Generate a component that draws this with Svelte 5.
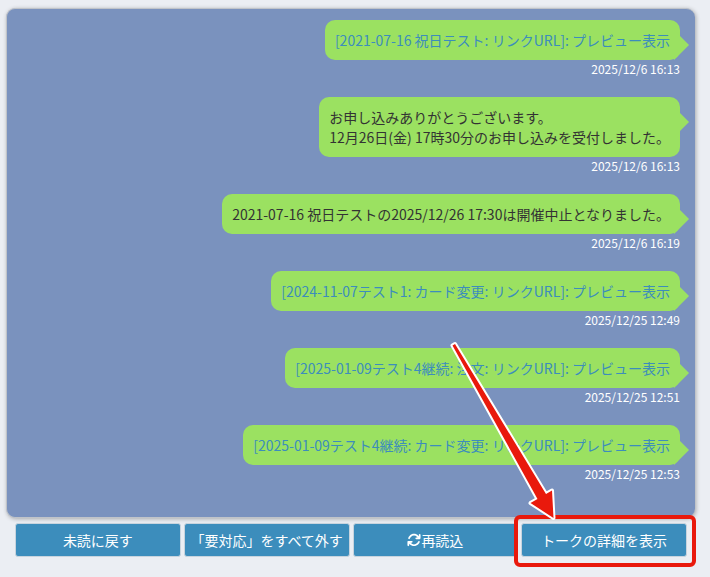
<script lang="ts">
  interface Message {
    lines: string[];
    sentAt: string;
    preview?: boolean;
  }

  const messages: Message[] = [
    { lines: ['[2021-07-16 祝日テスト: リンクURL]: プレビュー表示'], sentAt: '2025/12/6 16:13', preview: true },
    {
      lines: ['お申し込みありがとうございます。', '12月26日(金) 17時30分のお申し込みを受付しました。'],
      sentAt: '2025/12/6 16:13',
    },
    { lines: ['2021-07-16 祝日テストの2025/12/26 17:30は開催中止となりました。'], sentAt: '2025/12/6 16:19' },
    { lines: ['[2024-11-07テスト1: カード変更: リンクURL]: プレビュー表示'], sentAt: '2025/12/25 12:49', preview: true },
    { lines: ['[2025-01-09テスト4継続: 注文: リンクURL]: プレビュー表示'], sentAt: '2025/12/25 12:51', preview: true },
    { lines: ['[2025-01-09テスト4継続: カード変更: リンクURL]: プレビュー表示'], sentAt: '2025/12/25 12:53', preview: true },
  ];
</script>

<main class="talk">
  <section class="talk__log">
    {#each messages as message}
      <article class="message">
        <div class="message__bubble">
          {#each message.lines as line}
            {#if message.preview}
              <a href="#preview">{line}</a>
            {:else}
              <p>{line}</p>
            {/if}
          {/each}
        </div>
        <time class="message__time">{message.sentAt}</time>
      </article>
    {/each}
  </section>

  <div class="actions">
    <button type="button">未読に戻す</button>
    <button type="button">「要対応」をすべて外す</button>
    <button type="button">
      <svg class="icon" viewBox="0 0 512 512" aria-hidden="true">
        <path
          d="M105.1 202.6c7.7-21.8 20.2-42.3 37.8-59.8c62.5-62.5 163.8-62.5 226.3 0L386.3 160H336c-17.7 0-32 14.3-32 32s14.3 32 32 32H463.5h.4c17.7 0 32-14.3 32-32V64c0-17.7-14.3-32-32-32s-32 14.3-32 32v51.2L414.4 97.6c-87.5-87.5-229.3-87.5-316.8 0C73.2 122 55.6 150.7 44.8 181.4c-5.9 16.7 2.9 34.9 19.5 40.8s34.9-2.9 40.8-19.5zM39 289.3c-5 1.5-9.8 4.2-13.7 8.2c-4 4-6.7 8.8-8.1 14c-.3 1.2-.6 2.5-.8 3.8c-.3 1.7-.4 3.4-.4 5.1V448c0 17.7 14.3 32 32 32s32-14.3 32-32V396.9l17.6 17.5c87.5 87.4 229.3 87.4 316.7 0c24.4-24.4 42.1-53.1 52.9-83.7c5.9-16.7-2.9-34.9-19.5-40.8s-34.9 2.9-40.8 19.5c-7.7 21.8-20.2 42.3-37.8 59.8c-62.5 62.5-163.8 62.5-226.3 0l-.1-.1L125.6 352H176c17.7 0 32-14.3 32-32s-14.3-32-32-32H48.4c-1.6 0-3.2 .1-4.8 .3s-3.1 .5-4.6 1z"
        />
      </svg>再読込
    </button>
    <div class="callout">
      <button type="button">トークの詳細を表示</button>
      <!-- Flèche posée par-dessus la conversation, pointe sur le cadre rouge -->
      <svg class="callout__arrow" viewBox="0 0 110 180" aria-hidden="true">
        <path d="M4.5 4.500 L7 3 L98 153 L104 149.500 L105.500 177 L82.500 162 L89.500 158 Z" />
      </svg>
    </div>
  </div>
</main>

<style>
  :global(body) {
    margin: 0;
    background: #ebeef3;
    color: #333;
    font-family: 'Noto Sans CJK JP', sans-serif;
    font-size: 14px;
    line-height: 20px;
  }
  .talk {
    padding: 8px 15px 10px 6px;
  }
  .talk__log {
    display: flex;
    flex-direction: column;
    gap: 20px;
    padding: 11px 15px 35px;
    background: #7a92be;
    border: 1px solid #bfc3c9;
    border-right-width: 0;
    border-radius: 9px;
    box-shadow: 1px 1px 4px rgba(0, 0, 0, 0.3);
  }
  .message {
    display: flex;
    flex-direction: column;
    align-items: flex-end;
  }
  .message__bubble {
    position: relative;
    padding: 10px;
    background: #9be161;
    border-radius: 10px;
  }
  .message__bubble::after {
    content: '';
    position: absolute;
    top: 10px;
    right: -9px;
    border: 15px solid transparent;
    border-right-width: 0;
    border-left-color: #9be161;
  }
  .message__bubble p {
    margin: 0;
  }
  .message__bubble a {
    display: block;
    color: #3c8dbc;
    text-decoration: none;
  }
  .message__time {
    color: #fff;
    font-size: 12px;
    line-height: 17px;
  }
  .actions {
    display: grid;
    grid-template-columns: repeat(4, 1fr);
    gap: 3px;
    padding: 5px 8px 0 9px;
  }
  button {
    display: flex;
    align-items: center;
    justify-content: center;
    width: 100%;
    margin: 0;
    padding: 6px 0;
    background: #3c8dbc;
    color: #fff;
    border: 1px solid #c8d4de;
    border-radius: 3px;
    font: inherit;
    white-space: nowrap;
    cursor: pointer;
  }
  .icon {
    width: 14px;
    height: 14px;
    fill: currentColor;
  }
  .callout {
    position: relative;
  }
  .callout::after {
    content: '';
    position: absolute;
    inset: -8px -9px -10px -7px;
    border: 4px solid #e9190c;
    border-radius: 6px;
    pointer-events: none;
  }
  .callout__arrow {
    position: absolute;
    right: 129px;
    bottom: 36px;
    z-index: 1;
    width: 110px;
    height: 180px;
    overflow: visible;
    fill: #e9190c;
    stroke: #fff;
    stroke-width: 4px;
    stroke-linejoin: round;
    paint-order: stroke;
    pointer-events: none;
  }
</style>
